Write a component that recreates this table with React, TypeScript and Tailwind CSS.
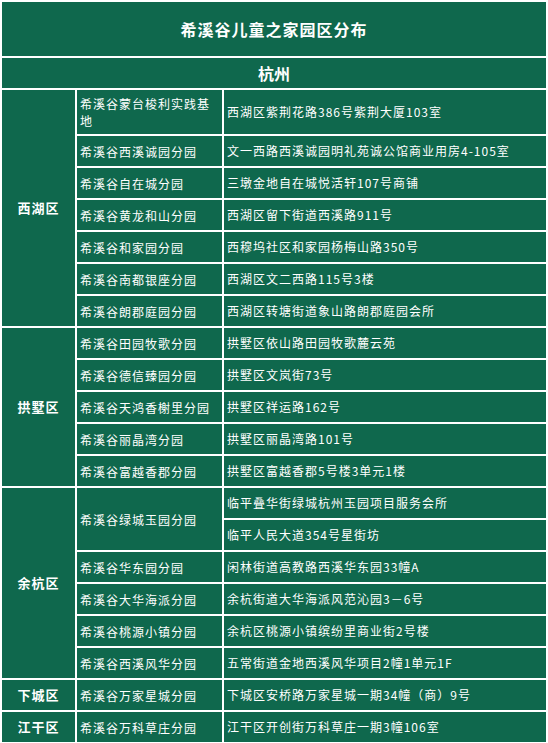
import { Fragment } from 'react';

const xihu = [
  { name: '希溪谷蒙台梭利实践基地', addr: ['西湖区紫荆花路386号紫荆大厦103室'], tall: true },
  { name: '希溪谷西溪诚园分园', addr: ['文一西路西溪诚园明礼苑诚公馆商业用房4-105室'] },
  { name: '希溪谷自在城分园', addr: ['三墩金地自在城悦活轩107号商铺'] },
  { name: '希溪谷黄龙和山分园', addr: ['西湖区留下街道西溪路911号'] },
  { name: '希溪谷和家园分园', addr: ['西穆坞社区和家园杨梅山路350号'] },
  { name: '希溪谷南都银座分园', addr: ['西湖区文二西路115号3楼'] },
  { name: '希溪谷朗郡庭园分园', addr: ['西湖区转塘街道象山路朗郡庭园会所'] },
];

const gongshu = [
  { name: '希溪谷田园牧歌分园', addr: ['拱墅区依山路田园牧歌麓云苑'] },
  { name: '希溪谷德信臻园分园', addr: ['拱墅区文岚街73号'] },
  { name: '希溪谷天鸿香榭里分园', addr: ['拱墅区祥运路162号'] },
  { name: '希溪谷丽晶湾分园', addr: ['拱墅区丽晶湾路101号'] },
  { name: '希溪谷富越香郡分园', addr: ['拱墅区富越香郡5号楼3单元1楼'] },
];

const yuhang = [
  { name: '希溪谷绿城玉园分园', addr: ['临平叠华街绿城杭州玉园项目服务会所', '临平人民大道354号星街坊'] },
  { name: '希溪谷华东园分园', addr: ['闲林街道高教路西溪华东园33幢A'] },
  { name: '希溪谷大华海派分园', addr: ['余杭街道大华海派风范沁园3－6号'] },
  { name: '希溪谷桃源小镇分园', addr: ['余杭区桃源小镇缤纷里商业街2号楼'] },
  { name: '希溪谷西溪风华分园', addr: ['五常街道金地西溪风华项目2幢1单元1F'] },
];

type Item = { name: string; addr: string[]; tall?: boolean };

const districts: { label: string; span: string; items: Item[] }[] = [
  { label: '西湖区', span: 'row-span-7', items: xihu },
  { label: '拱墅区', span: 'row-span-5', items: gongshu },
  { label: '余杭区', span: 'row-span-6', items: yuhang },
  { label: '下城区', span: 'row-span-1', items: [{ name: '希溪谷万家星城分园', addr: ['下城区安桥路万家星城一期34幢（商）9号'] }] },
  { label: '江干区', span: 'row-span-1', items: [{ name: '希溪谷万科草庄分园', addr: ['江干区开创街万科草庄一期3幢106室'] }] },
];

const cell = 'bg-[#0f684d] text-white';

export default function App() {
  return (
    <div className="w-[548px] h-[743px] bg-white p-[2px]" style={{ fontFamily: "'Noto Sans CJK SC', 'Noto Sans', sans-serif" }}>
      <div className="grid grid-cols-[73px_145px_1fr] gap-[2px]">
        <div className={`${cell} col-span-3 h-[54px] flex items-center justify-center text-[16px] font-bold tracking-[1px]`}>
          希溪谷儿童之家园区分布
        </div>
        <div className={`${cell} col-span-3 h-[30px] flex items-center justify-center text-[16px] font-bold`}>
          杭州
        </div>

        {districts.map((d) => (
          <Fragment key={d.label}>
            <div className={`${cell} col-start-1 ${d.span} flex items-center justify-center text-[13px] font-bold tracking-[1px]`}>
              {d.label}
            </div>
            {d.items.map((it) => (
              <Fragment key={it.name}>
                <div
                  className={`${cell} col-start-2 ${it.addr.length > 1 ? 'row-span-2' : ''} flex items-center px-[3px] text-[12px] leading-[17px] tracking-[1px]`}
                >
                  {it.name}
                </div>
                {it.addr.map((a) => (
                  <div
                    key={a}
                    className={`${cell} col-start-3 ${it.tall ? 'h-[44px]' : 'h-[30px]'} flex items-center px-[3px] text-[12px] tracking-[1px]`}
                  >
                    {a}
                  </div>
                ))}
              </Fragment>
            ))}
          </Fragment>
        ))}
      </div>
    </div>
  );
}
